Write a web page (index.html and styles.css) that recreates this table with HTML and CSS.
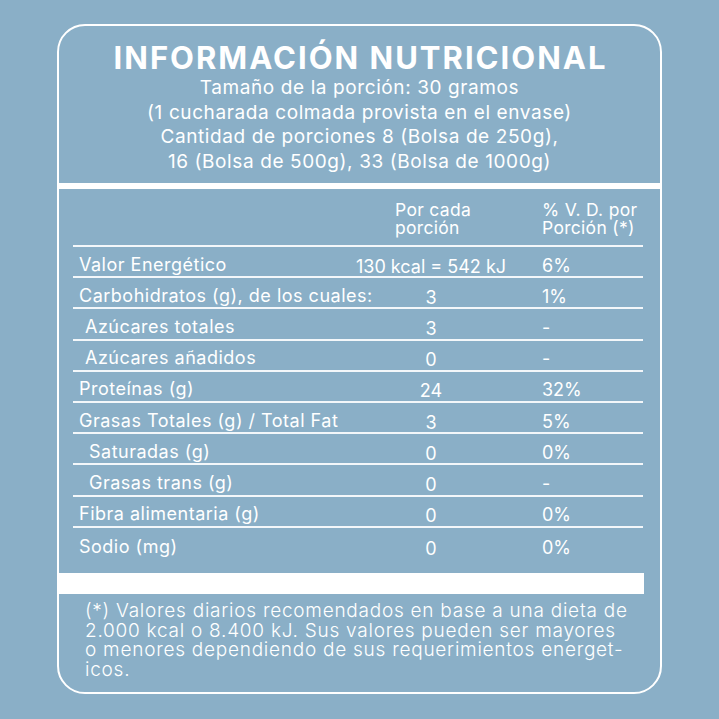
FILE: index.html
```html
<!DOCTYPE html>
<html lang="es">
<head>
<meta charset="utf-8">
<title>Información Nutricional</title>
<link rel="stylesheet" href="styles.css">
</head>
<body>
<div class="card">
  <header class="head">
    <h1 class="title">INFORMACIÓN NUTRICIONAL</h1>
    <p class="sub">Tamaño de la porción: 30 gramos<br>(1 cucharada colmada provista en el envase)<br>Cantidad de porciones 8 (Bolsa de 250g),<br>16 (Bolsa de 500g), 33 (Bolsa de 1000g)</p>
  </header>
  <div class="band"></div>
  <section class="table">
    <div class="row hrow">
      <div class="lbl"></div>
      <div class="hcell hval">Por cada<br>porción</div>
      <div class="hcell hpct">% V. D. por<br>Porción (*)</div>
    </div>
    <div class="row"><div class="lbl">Valor Energético</div><div class="val">130 kcal = 542 kJ</div><div class="pct">6%</div></div>
    <div class="row"><div class="lbl">Carbohidratos (g), de los cuales:</div><div class="val">3</div><div class="pct">1%</div></div>
    <div class="row"><div class="lbl in1">Azúcares totales</div><div class="val">3</div><div class="pct">-</div></div>
    <div class="row"><div class="lbl in1">Azúcares añadidos</div><div class="val">0</div><div class="pct">-</div></div>
    <div class="row"><div class="lbl">Proteínas (g)</div><div class="val">24</div><div class="pct">32%</div></div>
    <div class="row"><div class="lbl">Grasas Totales (g) / Total Fat</div><div class="val">3</div><div class="pct">5%</div></div>
    <div class="row"><div class="lbl in2">Saturadas (g)</div><div class="val">0</div><div class="pct">0%</div></div>
    <div class="row"><div class="lbl in2">Grasas trans (g)</div><div class="val">0</div><div class="pct">-</div></div>
    <div class="row"><div class="lbl">Fibra alimentaria (g)</div><div class="val">0</div><div class="pct">0%</div></div>
    <div class="row last"><div class="lbl">Sodio (mg)</div><div class="val">0</div><div class="pct">0%</div></div>
  </section>
  <div class="band2"></div>
  <footer class="foot">(*) Valores diarios recomendados en base a una dieta de<br>2.000 kcal o 8.400 kJ. Sus valores pueden ser mayores<br>o menores dependiendo de sus requerimientos energet-<br>icos.</footer>
</div>
</body>
</html>
```

FILE: styles.css
```css
html, body {
  margin: 0;
  padding: 0;
  background: #8aafc7;
}
body {
  font-family: Inter, "Open Sans", "DejaVu Sans", sans-serif;
  color: #ffffff;
  width: 719px;
  height: 719px;
  overflow: hidden;
}
.card {
  box-sizing: border-box;
  margin: 24px 0 0 57px;
  width: 605px;
  height: 670px;
  border: 2px solid #ffffff;
  border-radius: 28px;
  overflow: hidden;
  display: flex;
  flex-direction: column;
}
.head {
  box-sizing: border-box;
  height: 157px;
  padding-top: 15px;
  text-align: center;
}
.title {
  margin: 0;
  font-size: 31px;
  line-height: 34px;
  font-weight: 700;
  letter-spacing: 2px;
  padding-left: 2px;
}
.sub {
  margin: 1px 0 0;
  font-size: 19px;
  line-height: 24.6px;
  font-weight: 400;
  letter-spacing: 0.6px;
}
.band {
  height: 6px;
  background: #ffffff;
}
.table {
  box-sizing: border-box;
  height: 384px;
  padding: 12px 17px 0 14px;
}
.row {
  box-sizing: border-box;
  display: grid;
  grid-template-columns: 283px 150px 1fr;
  align-items: end;
  height: 31.2px;
  border-bottom: 2px solid #f3f7fa;
  font-size: 18px;
  line-height: 20px;
  padding-bottom: 1.5px;
  white-space: nowrap;
}
.row.last {
  border-bottom: none;
}
.hrow {
  height: 46px;
  font-size: 17.5px;
  line-height: 17.5px;
  padding-bottom: 9px;
}
.lbl {
  padding-left: 6px;
  letter-spacing: 0.5px;
}
.lbl.in1 {
  padding-left: 12px;
}
.lbl.in2 {
  padding-left: 16px;
}
.val {
  text-align: center;
  position: relative;
  top: 2px;
}
.pct {
  padding-left: 36px;
  position: relative;
  top: 1px;
}
.hcell {
  white-space: nowrap;
  letter-spacing: 0.3px;
}
.hval {
  padding-left: 39px;
}
.hpct {
  padding-left: 36px;
}
.band2 {
  height: 21px;
  margin-right: 16px;
  background: #ffffff;
}
.foot {
  padding: 7px 0 0 26px;
  font-size: 19px;
  line-height: 19.7px;
  font-weight: 300;
  letter-spacing: 0.75px;
  white-space: nowrap;
}
```
